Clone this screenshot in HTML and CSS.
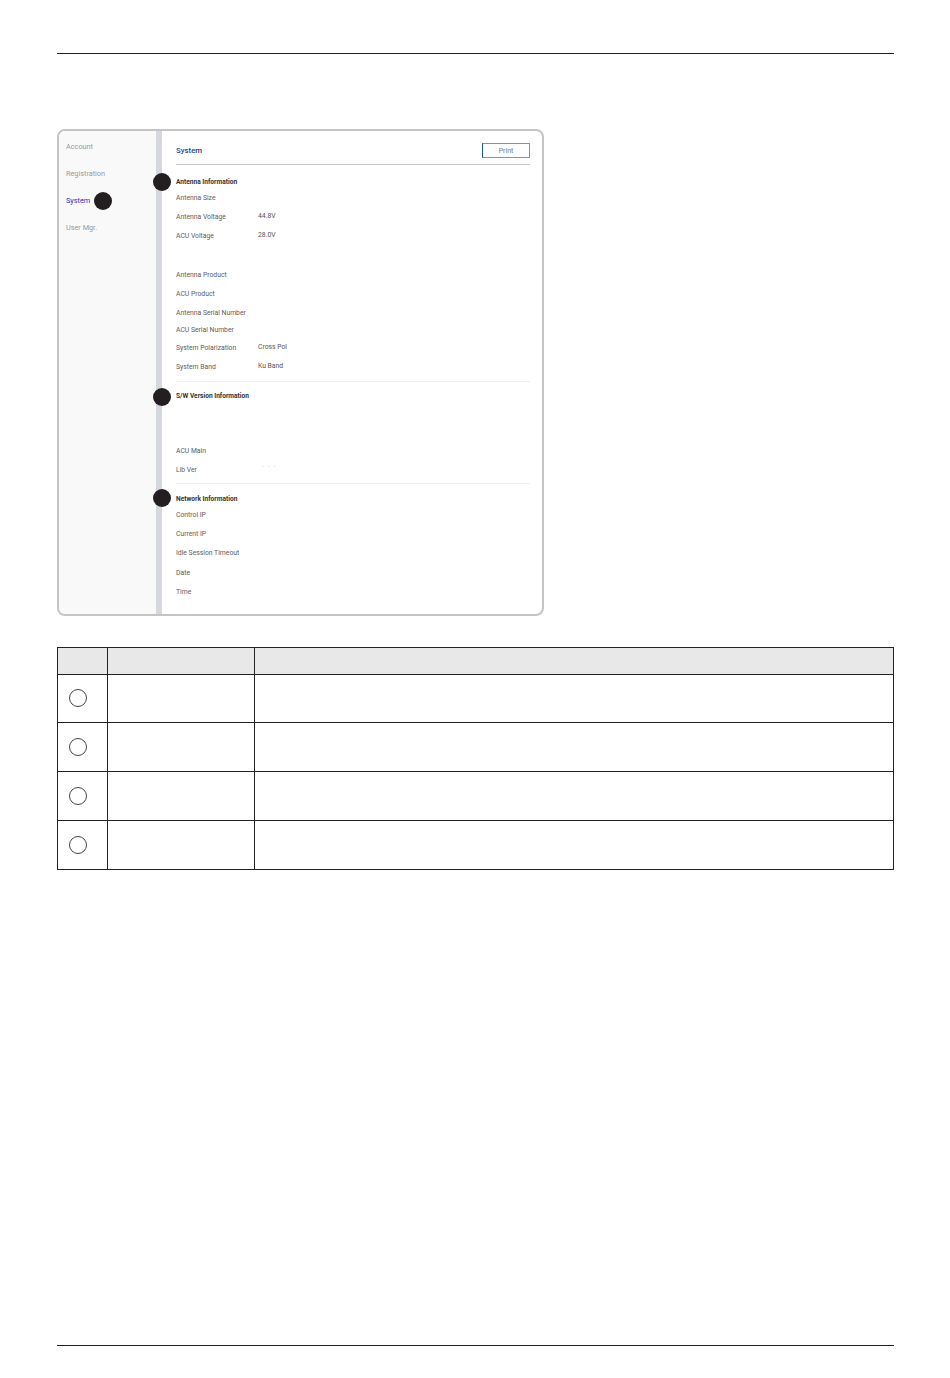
FILE: index.html
```html
<!DOCTYPE html>
<html lang="en">
<head>
    <meta charset="UTF-8">
    <meta name="viewport" content="width=device-width, initial-scale=1.0">
    <title>System</title>
    <link rel="stylesheet" href="styles.css">
</head>
<body>
    <div class="page">
        <div class="panel">
            <nav class="sidebar">
                <div class="nav-item">Account</div>
                <div class="nav-item">Registration</div>
                <div class="nav-item active">System<span class="nav-dot"></span></div>
                <div class="nav-item">User Mgr.</div>
            </nav>
            <main class="content">
                <div class="content-head">
                    <span class="content-title">System</span>
                    <button type="button" class="print-btn">Print</button>
                </div>

                <section class="info-section first">
                    <h2 class="section-title">Antenna Information</h2>
                    <div class="row"><span class="label">Antenna Size</span></div>
                    <div class="row"><span class="label">Antenna Voltage</span><span class="value">44.8V</span></div>
                    <div class="row"><span class="label">ACU Voltage</span><span class="value">28.0V</span></div>
                    <div class="row row-blank"></div>
                    <div class="row"><span class="label">Antenna Product</span></div>
                    <div class="row"><span class="label">ACU Product</span></div>
                    <div class="row row-tall"><span class="label">Antenna Serial Number</span></div>
                    <div class="row row-short"><span class="label">ACU Serial Number</span></div>
                    <div class="row"><span class="label">System Polarization</span><span class="value">Cross Pol</span></div>
                    <div class="row"><span class="label">System Band</span><span class="value">Ku Band</span></div>
                </section>

                <section class="info-section">
                    <h2 class="section-title tight">S/W Version Information</h2>
                    <div class="row-gap"></div>
                    <div class="row"><span class="label">ACU Main</span></div>
                    <div class="row"><span class="label">Lib Ver</span><span class="value faint">- - -</span></div>
                </section>

                <section class="info-section last">
                    <h2 class="section-title">Network Information</h2>
                    <div class="row"><span class="label">Control IP</span></div>
                    <div class="row"><span class="label">Current IP</span></div>
                    <div class="row"><span class="label">Idle Session Timeout</span></div>
                    <div class="row"><span class="label">Date</span></div>
                    <div class="row"><span class="label">Time</span></div>
                </section>
            </main>
        </div>

        <table class="legend">
            <colgroup>
                <col class="col-no">
                <col class="col-name">
                <col>
            </colgroup>
            <thead>
                <tr><th></th><th></th><th></th></tr>
            </thead>
            <tbody>
                <tr class="first-row"><td><span class="ring"></span></td><td></td><td></td></tr>
                <tr><td><span class="ring"></span></td><td></td><td></td></tr>
                <tr><td><span class="ring"></span></td><td></td><td></td></tr>
                <tr><td><span class="ring"></span></td><td></td><td></td></tr>
            </tbody>
        </table>

        <div class="page-foot"></div>
    </div>
</body>
</html>
```

FILE: styles.css
```css
:root {
    --line-color: #222;
    --label-color: #5c5c5c;
    --blue: #1c35c0;
}
body {
    margin: 0;
    font-family: Roboto, 'Liberation Sans', sans-serif;
    background-color: #fff;
}
.page {
    box-sizing: border-box;
    width: 950px;
    height: 1378px;
    padding-top: 53px;
    padding-left: 57px;
    padding-right: 56px;
    display: flex;
    flex-direction: column;
}
.page::before {
    content: "";
    display: block;
    height: 1px;
    background-color: var(--line-color);
}

/* screenshot panel */
.panel {
    box-sizing: border-box;
    display: flex;
    width: 487px;
    height: 487px;
    margin-top: 75px;
    border: 2px solid #c4c4c4;
    border-radius: 8px;
    overflow: hidden;
}
.sidebar {
    box-sizing: border-box;
    width: 103px;
    flex-shrink: 0;
    padding-top: 2px;
    padding-left: 7px;
    background-color: #f9f9f9;
    border-right: 6px solid #d5d8df;
}
.nav-item {
    display: flex;
    align-items: center;
    height: 27px;
    font-size: 7.3px;
    color: #9a9a9a;
}
.nav-item.active {
    color: var(--blue);
}
.nav-dot {
    width: 18px;
    height: 18px;
    margin-left: 4px;
    border-radius: 50%;
    background-color: #231f20;
}
.content {
    flex: 1;
    padding: 0 12px 0 14px;
}
.content-head {
    display: flex;
    justify-content: space-between;
    align-items: center;
    height: 27px;
    padding-top: 6px;
    border-bottom: 1px solid #c8c8c8;
}
.content-title {
    font-size: 7.8px;
    font-weight: 500;
    color: #2b3f80;
}
.print-btn {
    box-sizing: border-box;
    width: 48px;
    height: 15px;
    padding: 0;
    font-family: inherit;
    font-size: 7px;
    color: #777;
    background-color: #fff;
    border: 1px solid #6f94d4;
    border-left-color: #1c50b8;
}
.info-section {
    padding-top: 6px;
    padding-bottom: 4px;
    border-bottom: 1px solid #eee;
}
.info-section.first {
    padding-top: 8px;
    padding-bottom: 5px;
}
.info-section.last {
    border-bottom: none;
}
.section-title {
    box-sizing: border-box;
    position: relative;
    display: flex;
    align-items: center;
    height: 16px;
    margin: 0 0 -1px;
    padding-top: 2px;
    font-size: 6.6px;
    font-weight: 700;
    color: #333;
}
.section-title.tight {
    padding-top: 0;
}
.section-title::before {
    content: "";
    position: absolute;
    left: -23px;
    top: 0;
    width: 18px;
    height: 18px;
    border-radius: 50%;
    background-color: #231f20;
}
.info-section.last .section-title::before {
    top: -1px;
}
.row {
    display: flex;
    align-items: center;
    height: 19px;
    font-size: 6.8px;
    color: var(--label-color);
}
.info-section.last .row {
    height: 19.4px;
}
.row-blank {
    height: 20px;
}
.row-tall {
    height: 20px;
}
.row-short {
    height: 14px;
    margin-bottom: 1px;
}
.row-gap {
    height: 38px;
}
.label {
    width: 82px;
    flex-shrink: 0;
}
.value {
    margin-bottom: 1px;
    color: #555;
}
.value.faint {
    padding-left: 4px;
    margin-bottom: 7px;
    font-size: 5.5px;
    letter-spacing: 1.5px;
    color: #bbb;
}

/* legend table */
.legend {
    width: 837px;
    margin-top: 31px;
    border-collapse: collapse;
    table-layout: fixed;
}
.col-no {
    width: 50px;
}
.col-name {
    width: 147px;
}
.legend th,
.legend td {
    padding: 0;
    border: 1px solid var(--line-color);
}
.legend th {
    height: 26px;
    background-color: #e8e8e8;
}
.legend td {
    height: 48px;
}
.legend .first-row td {
    height: 47px;
}
.ring {
    box-sizing: border-box;
    display: block;
    width: 18px;
    height: 18px;
    margin-left: 11px;
    border: 1px solid #444;
    border-radius: 50%;
}
.first-row .ring {
    margin-bottom: 1px;
}
.page-foot {
    height: 1px;
    margin-top: auto;
    margin-bottom: 32px;
    background-color: var(--line-color);
}
```
